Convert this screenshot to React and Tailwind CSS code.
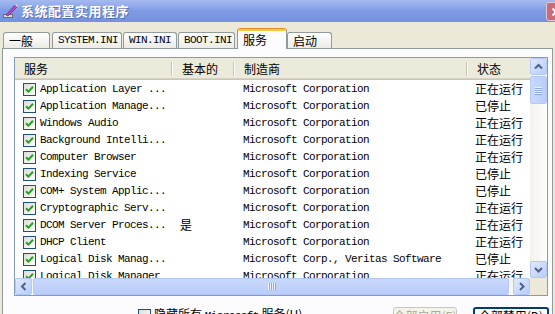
import React from 'react'

const services = [
  ['Application Layer ...', '', 'Microsoft Corporation', '正在运行'],
  ['Application Manage...', '', 'Microsoft Corporation', '已停止'],
  ['Windows Audio', '', 'Microsoft Corporation', '正在运行'],
  ['Background Intelli...', '', 'Microsoft Corporation', '正在运行'],
  ['Computer Browser', '', 'Microsoft Corporation', '正在运行'],
  ['Indexing Service', '', 'Microsoft Corporation', '已停止'],
  ['COM+ System Applic...', '', 'Microsoft Corporation', '已停止'],
  ['Cryptographic Serv...', '', 'Microsoft Corporation', '正在运行'],
  ['DCOM Server Proces...', '是', 'Microsoft Corporation', '正在运行'],
  ['DHCP Client', '', 'Microsoft Corporation', '正在运行'],
  ['Logical Disk Manag...', '', 'Microsoft Corp., Veritas Software', '已停止'],
  ['Logical Disk Manager', '', 'Microsoft Corporation', '正在运行'],
]

const mono = "font-['Liberation_Mono','Noto_Sans_CJK_SC',monospace] text-[11px] tracking-[-0.6px] text-black"
const cjk = "font-['Noto_Sans_CJK_SC',sans-serif] text-[12px] text-black"

const Check = ({ checked = true }) => (
  <span className="w-[13px] h-[13px] shrink-0 border border-[#1c5180] bg-gradient-to-br from-[#dcdcd7] to-white flex items-center justify-center">
    {checked && (
      <svg width="9" height="9" viewBox="0 0 9 9">
        <path d="M1 4.2 L3.4 6.6 L8 1.8" stroke="#21a121" strokeWidth="2" fill="none" />
      </svg>
    )}
  </span>
)

const arrows = {
  up: 'M5 10.5 L8.5 7 L12 10.5',
  down: 'M5 7 L8.5 10.5 L12 7',
  left: 'M10.5 5 L7 8.5 L10.5 12',
  right: 'M7 5 L10.5 8.5 L7 12',
}

const ScrollBtn = ({ dir }) => (
  <div className="w-[17px] h-[17px] shrink-0 rounded-[2px] border border-[#b4c8f6] bg-gradient-to-br from-[#e0e9fe] to-[#b8ccfb] flex items-center justify-center">
    <svg width="17" height="17" viewBox="0 0 17 17" className="-m-px">
      <path d={arrows[dir]} stroke="#4d6185" strokeWidth="2" fill="none" />
    </svg>
  </div>
)

const Tab = ({ label, w, ml, font }) => (
  <div
    className={`${w} ${ml} h-[16px] rounded-t-[3px] border border-b-0 border-[#919b9c] bg-gradient-to-b from-white to-[#ecebe6] flex items-center pl-[5px] ${font}`}
  >
    {label}
  </div>
)

export default function App() {
  return (
    <div className="w-[555px] h-[314px] overflow-hidden bg-[#ece9d8] flex flex-col">
      {/* Title bar */}
      <div className="h-[22px] shrink-0 flex items-center bg-gradient-to-b from-[#a6baf0] via-[#7f9be4] to-[#7391df]">
        <svg width="16" height="16" viewBox="0 0 16 16" className="ml-[2px]">
          <rect x="1" y="11" width="10" height="4" fill="#6b6b6b" />
          <rect x="2" y="12" width="8" height="2" fill="#dcdcdc" />
          <path d="M4 12 L13 2 L15 4 L6 13 Z" fill="#b24ac4" stroke="#5a1f6a" strokeWidth="0.6" />
          <path d="M13 2 L15 4 L16 3 L14 1 Z" fill="#e0e0e0" />
        </svg>
        <span className="ml-[3px] font-['Noto_Sans_CJK_SC',sans-serif] font-bold text-[13px] tracking-[0.5px] text-white [text-shadow:1px_1px_0_#5670b8]">
          系统配置实用程序
        </span>
        <div className="ml-auto mr-[-12px] mt-[1px] w-[21px] h-[19px] rounded-[3px] border border-[#e8c5cc] bg-[#c66d7d] flex items-center pl-[4px]">
          <svg width="10" height="10" viewBox="0 0 10 10">
            <path d="M1.5 1.5 L8.5 8.5 M8.5 1.5 L1.5 8.5" stroke="white" strokeWidth="2" />
          </svg>
        </div>
      </div>

      {/* Tabs */}
      <div className="h-[26px] shrink-0 pl-[3px] flex items-end">
        <Tab label="一般" w="w-[47px]" ml="" font={cjk} />
        <Tab label="SYSTEM.INI" w="w-[70px]" ml="ml-[2px]" font={mono} />
        <Tab label="WIN.INI" w="w-[54px]" ml="ml-[1px]" font={mono} />
        <Tab label="BOOT.INI" w="w-[57px]" ml="ml-[1px]" font={mono} />
        <div className="relative z-10 ml-[2px] mb-[-1px] w-[50px] h-[21px] rounded-t-[3px] overflow-hidden border-x border-[#919b9c] bg-[#fcfcfe] flex flex-col">
          <div className="h-px bg-[#e68b2c]" />
          <div className="h-[2px] bg-[#ffc73c]" />
          <div className={`flex-1 flex items-center pl-[5px] ${cjk}`}>服务</div>
        </div>
        <Tab label="启动" w="w-[45px]" ml="" font={cjk} />
      </div>

      {/* Panel */}
      <div className="relative ml-[2px] w-[551px] flex-1 border border-[#919b9c] bg-[#fcfcfe] pt-[8px] pl-[11px] flex flex-col">
        <div className="w-[534px] h-[239px] border border-[#7f9db9] bg-white grid grid-cols-[515px_17px] grid-rows-[220px_17px]">
          {/* list */}
          <div className="overflow-hidden flex flex-col">
            <div className="h-[20px] shrink-0 bg-[#ebeadb] flex pt-px">
              {[
                ['服务', 'w-[158px]', true],
                ['基本的', 'w-[62px]', true],
                ['制造商', 'w-[233px]', true],
                ['状态', 'flex-1', false],
              ].map(([t, w, sep]) => (
                <div key={t} className={`${w} flex items-center pl-[9px] ${cjk}`}>
                  <span>{t}</span>
                  {sep && <span className="ml-auto mr-[1px] w-px h-[14px] bg-[#c7c5b2] shadow-[1px_0_0_#fff]" />}
                </div>
              ))}
            </div>
            <div className="h-px shrink-0 bg-[#d6d2c2]" />
            <div className="h-px shrink-0 bg-[#cbc7b8]" />
            {services.map(([name, basic, maker, state]) => (
              <div key={name} className="h-[17px] shrink-0 flex items-center pt-px">
                <div className="w-[158px] flex items-center pl-[8px] gap-[4px]">
                  <Check />
                  <span className={`${mono} whitespace-nowrap`}>{name}</span>
                </div>
                <div className={`w-[62px] pl-[7px] ${cjk}`}>{basic}</div>
                <div className={`w-[233px] pl-[8px] whitespace-nowrap ${mono}`}>{maker}</div>
                <div className={`flex-1 pl-[7px] ${cjk}`}>{state}</div>
              </div>
            ))}
          </div>

          {/* vertical scrollbar */}
          <div className="bg-gradient-to-r from-[#f3f1ec] to-[#fefefb] flex flex-col">
            <ScrollBtn dir="up" />
            <div className="mt-px h-[28px] rounded-[2px] border border-[#b4c8f6] bg-gradient-to-r from-[#c9d8fc] to-[#b9cdfb] flex flex-col items-center justify-center gap-px">
              {[0, 1, 2, 3].map((i) => (
                <div key={i} className="w-[7px] h-px bg-[#eef3fe] shadow-[0_1px_0_#8ca5e4]" />
              ))}
            </div>
            <div className="flex-1" />
            <ScrollBtn dir="down" />
          </div>

          {/* horizontal scrollbar */}
          <div className="bg-gradient-to-b from-[#f3f1ec] to-[#fefefb] flex">
            <ScrollBtn dir="left" />
            <div className="ml-px w-[476px] rounded-[2px] border border-[#b4c8f6] bg-gradient-to-b from-[#c9d8fc] to-[#b9cdfb] flex items-center justify-center gap-px">
              {[0, 1, 2, 3].map((i) => (
                <div key={i} className="w-px h-[7px] bg-[#eef3fe] shadow-[1px_0_0_#8ca5e4]" />
              ))}
            </div>
            <div className="flex-1" />
            <ScrollBtn dir="right" />
          </div>
          <div className="bg-[#ece9d8]" />
        </div>

        {/* bottom controls */}
        <div className="mt-[11px] flex items-start">
          <div className="ml-[124px] mt-[2px] flex items-start gap-[3px]">
            <span className="w-[13px] h-[13px] border border-[#1c5180] bg-gradient-to-br from-[#dcdcd7] to-white" />
            <span className={`${cjk} leading-none whitespace-nowrap -mt-px`}>
              隐藏所有 <span className={mono}>Microsoft</span> 服务(H)
            </span>
          </div>
          <div className="ml-auto mr-[3px] flex gap-[16px]">
            <div className="w-[64px] h-[23px] rounded-[3px] border border-[#c9c7ba] bg-[#f5f4ea] flex items-start justify-center pt-[2px] leading-none whitespace-nowrap font-['Noto_Sans_CJK_SC',sans-serif] text-[12px] text-[#aca899]">
              全部启用(E)
            </div>
            <div className={`w-[76px] h-[23px] rounded-[3px] border-2 border-[#003c74] bg-gradient-to-b from-white to-[#ecebe6] flex items-start justify-center pt-px leading-none whitespace-nowrap ${cjk}`}>
              全部禁用(D)
            </div>
          </div>
        </div>
      </div>
    </div>
  )
}
